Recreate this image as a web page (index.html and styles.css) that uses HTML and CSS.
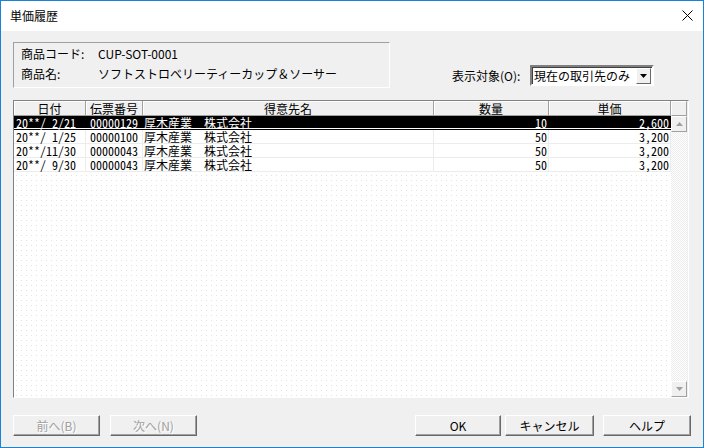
FILE: index.html
```html
<!DOCTYPE html>
<html lang="ja">
    <head>
        <title>単価履歴</title>
        <link rel="stylesheet" href="styles.css">
    </head>

    <body>
        <div class="Window">
            <div class="TitleBar">
                <span class="Title">単価履歴</span>
                <svg class="Close" width="11" height="11" viewBox="0 0 11 11">
                    <path d="M0.5 0.5 L10.5 10.5 M10.5 0.5 L0.5 10.5" stroke="#000" stroke-width="1" fill="none"/>
                </svg>
            </div>

            <div class="Content">
                <div class="TopRow">
                    <div class="InfoBox">
                        <div class="InfoRow"><span class="InfoLabel">商品コード:</span><span>CUP-SOT-0001</span></div>
                        <div class="InfoRow"><span class="InfoLabel">商品名:</span><span>ソフトストロベリーティーカップ＆ソーサー</span></div>
                    </div>
                    <div class="Filter">
                        <span class="FilterLabel">表示対象(O):</span>
                        <div class="Combo">
                            <span class="ComboText">現在の取引先のみ</span>
                            <span class="ComboBtn">
                                <svg width="7" height="4" viewBox="0 0 7 4"><path d="M0 0 H7 L3.5 4 Z" fill="#000"/></svg>
                            </span>
                        </div>
                    </div>
                </div>

                <div class="Grid">
                    <div class="GridMain">
                        <div class="GridHead">
                            <span class="Cell ColDate">日付</span>
                            <span class="Cell ColSlip">伝票番号</span>
                            <span class="Cell ColName">得意先名</span>
                            <span class="Cell ColQty">数量</span>
                            <span class="Cell ColPrice">単価</span>
                        </div>
                        <div class="GridRow Selected">
                            <span class="Cell ColDate">20**/ 2/21</span>
                            <span class="Cell ColSlip">00000129</span>
                            <span class="Cell ColName">厚木産業　株式会社</span>
                            <span class="Cell ColQty">10</span>
                            <span class="Cell ColPrice">2,600</span>
                        </div>
                        <div class="GridRow">
                            <span class="Cell ColDate">20**/ 1/25</span>
                            <span class="Cell ColSlip">00000100</span>
                            <span class="Cell ColName">厚木産業　株式会社</span>
                            <span class="Cell ColQty">50</span>
                            <span class="Cell ColPrice">3,200</span>
                        </div>
                        <div class="GridRow">
                            <span class="Cell ColDate">20**/11/30</span>
                            <span class="Cell ColSlip">00000043</span>
                            <span class="Cell ColName">厚木産業　株式会社</span>
                            <span class="Cell ColQty">50</span>
                            <span class="Cell ColPrice">3,200</span>
                        </div>
                        <div class="GridRow">
                            <span class="Cell ColDate">20**/ 9/30</span>
                            <span class="Cell ColSlip">00000043</span>
                            <span class="Cell ColName">厚木産業　株式会社</span>
                            <span class="Cell ColQty">50</span>
                            <span class="Cell ColPrice">3,200</span>
                        </div>
                        <div class="GridEmpty"></div>
                    </div>
                    <div class="ScrollBar">
                        <div class="SbCorner"></div>
                        <div class="SbBtn">
                            <svg width="7" height="4" viewBox="0 0 7 4"><path d="M0 4 H7 L3.5 0 Z" fill="#a0a0a0"/></svg>
                        </div>
                        <div class="SbTrack"></div>
                        <div class="SbBtn">
                            <svg width="7" height="4" viewBox="0 0 7 4"><path d="M0 0 H7 L3.5 4 Z" fill="#a0a0a0"/></svg>
                        </div>
                    </div>
                </div>

                <div class="ButtonRow">
                    <button class="Btn Disabled BtnPrev" type="button">前へ(B)</button>
                    <button class="Btn Disabled BtnNext" type="button">次へ(N)</button>
                    <button class="Btn BtnOk" type="button">OK</button>
                    <button class="Btn BtnCancel" type="button">キャンセル</button>
                    <button class="Btn BtnHelp" type="button">ヘルプ</button>
                </div>
            </div>
        </div>
    </body>
</html>
```

FILE: styles.css
```css
body{
    margin: 0;
    font-family: "Noto Sans CJK JP", "Noto Sans", sans-serif;
    font-size: 12px;
    color: #000;
}

.Window{
    width: 704px;
    height: 448px;
    box-sizing: border-box;
    border: 1px solid #1883d7;
    background: #f0f0f0;
    display: flex;
    flex-direction: column;
}

.TitleBar{
    height: 30px;
    background: #fff;
    display: flex;
    align-items: center;
    justify-content: space-between;
    padding: 0 10px 0 9px;
}

.Title{
    font-size: 12px;
    line-height: 14px;
}

.Close{
    margin-top: -2px;
}

.Content{
    padding: 0 12px 0 12px;
    display: flex;
    flex-direction: column;
}

.TopRow{
    display: flex;
    align-items: flex-end;
    margin-top: 11px;
}

.InfoBox{
    width: 377px;
    height: 46px;
    box-sizing: border-box;
    border: 1px solid;
    border-color: #a0a0a0 #fff #fff #a0a0a0;
    padding: 1px 0 0 7px;
}

.InfoRow{
    display: flex;
    height: 20px;
    align-items: center;
    line-height: 14px;
}

.InfoLabel{
    width: 77px;
}

.Filter{
    display: flex;
    align-items: center;
    margin: 0 0 2px 62px;
}

.FilterLabel{
    width: 78px;
    line-height: 14px;
}

.Combo{
    width: 124px;
    height: 21px;
    box-sizing: border-box;
    border: 2px solid;
    border-color: #808080 #fff #fff #808080;
    box-shadow: inset 1px 1px 0 #404040;
    background: #fff;
    display: flex;
    align-items: center;
    justify-content: space-between;
    padding: 0 1px 0 2px;
}

.ComboText{
    line-height: 14px;
}

.ComboBtn{
    width: 15px;
    height: 16px;
    box-sizing: border-box;
    background: #f0f0f0;
    border: 1px solid;
    border-color: #fff #696969 #696969 #fff;
    display: flex;
    align-items: center;
    justify-content: center;
}

.Grid{
    margin-top: 12px;
    width: 676px;
    height: 298px;
    box-sizing: border-box;
    border: 1px solid;
    border-color: #828282 #fff #fff #828282;
    display: flex;
}

.GridMain{
    width: 657px;
    display: flex;
    flex-direction: column;
    background: #fff;
}

.GridHead{
    display: flex;
    height: 15px;
    background: #f0f0f0;
}

.GridHead .Cell{
    justify-content: center;
    border-right: 1px solid #a0a0a0;
    border-bottom: 1px solid #a0a0a0;
    box-shadow: inset 1px 1px 0 #fff;
    line-height: 13px;
}

.GridRow{
    display: flex;
    height: 14px;
}

.Cell{
    display: flex;
    align-items: center;
    box-sizing: border-box;
    line-height: 13px;
    white-space: pre;
}

.GridRow .Cell{
    border-right: 1px solid #ececec;
    border-bottom: 1px solid #ececec;
}

.GridRow .ColDate,
.GridRow .ColSlip,
.GridRow .ColQty,
.GridRow .ColPrice{
    font-feature-settings: "hwid";
}

.ColDate{ width: 72px; padding-left: 2px; }
.ColSlip{ width: 57px; padding-left: 4px; }
.ColName{ width: 291px; padding-left: 1px; }
.ColQty{ width: 115px; justify-content: flex-end; padding-right: 1px; }
.ColPrice{ width: 122px; justify-content: flex-end; padding-right: 1px; }

.GridHead .ColDate,
.GridHead .ColSlip,
.GridHead .ColName,
.GridHead .ColQty,
.GridHead .ColPrice{
    padding: 0;
}

.GridRow.Selected{
    background: #000;
    color: #fff;
    box-shadow: inset 0 -1px 0 #000, inset 0 -2px 0 #fff;
}

.GridRow.Selected .Cell{
    border-color: transparent;
}

.GridEmpty{
    flex: 1;
    background-image: radial-gradient(circle, #e2e2e2 0.6px, transparent 0.8px);
    background-size: 5px 5px;
    background-position: 0 1px;
}

.ScrollBar{
    width: 16px;
    display: flex;
    flex-direction: column;
}

.SbCorner{
    height: 15px;
    box-sizing: border-box;
    background: #f0f0f0;
    border: 1px solid;
    border-color: #fff #a0a0a0 #a0a0a0 #fff;
}

.SbBtn{
    height: 16px;
    box-sizing: border-box;
    background: #f0f0f0;
    border: 1px solid;
    border-color: #fff #a0a0a0 #a0a0a0 #fff;
    display: flex;
    align-items: center;
    justify-content: center;
}

.SbTrack{
    flex: 1;
    background: repeating-conic-gradient(#ececec 0 25%, #fff 0 50%) 0 0 / 2px 2px;
}

.ButtonRow{
    display: flex;
    margin-top: 17px;
}

.Btn{
    height: 21px;
    box-sizing: border-box;
    font-family: "Noto Sans CJK JP", "Noto Sans", sans-serif;
    font-size: 12px;
    line-height: 14px;
    padding: 0;
    background: #f0f0f0;
    color: #000;
    border: 1px solid;
    border-color: #fff #696969 #696969 #fff;
    box-shadow: inset -1px -1px 0 #a0a0a0;
}

.Btn.Disabled{
    color: #a0a0a0;
    text-shadow: 1px 1px 0 #fff;
}

.BtnPrev{ width: 87px; }
.BtnNext{ width: 87px; margin-left: 10px; }
.BtnOk{ width: 86px; margin-left: auto; }
.BtnCancel{ width: 89px; margin-left: 4px; }
.BtnHelp{ width: 88px; margin-left: 9px; }
```
